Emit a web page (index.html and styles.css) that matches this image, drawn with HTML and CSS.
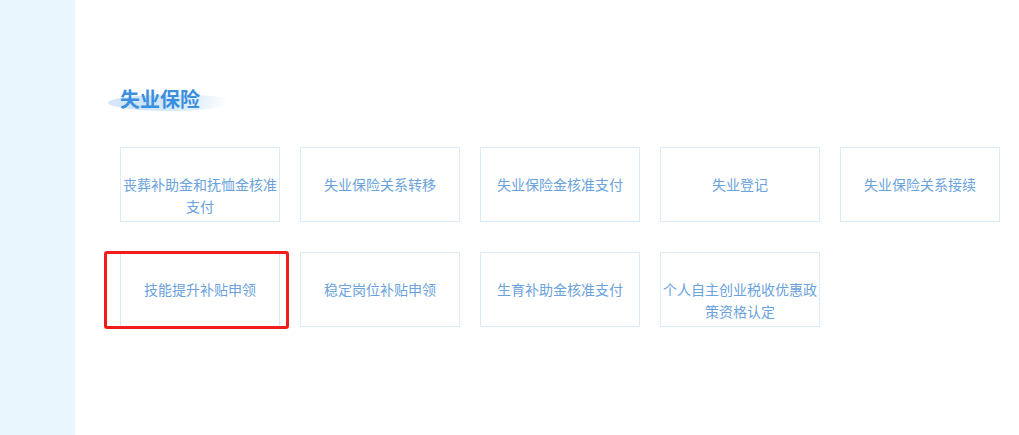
FILE: index.html
```html
<!DOCTYPE html>
<html lang="zh">
<head>
<meta charset="utf-8">
<link rel="stylesheet" href="styles.css">
</head>
<body>
<div class="page">
  <aside class="sidebar"></aside>
  <main class="main">
    <div class="title-wrap">
      <span class="brush"></span>
      <h2 class="title">失业保险</h2>
    </div>
    <div class="grid">
      <div class="card"><span>丧葬补助金和抚恤金核准支付</span></div>
      <div class="card"><span>失业保险关系转移</span></div>
      <div class="card"><span>失业保险金核准支付</span></div>
      <div class="card"><span>失业登记</span></div>
      <div class="card"><span>失业保险关系接续</span></div>
      <div class="card highlighted"><span>技能提升补贴申领</span><i class="mark"></i></div>
      <div class="card"><span>稳定岗位补贴申领</span></div>
      <div class="card"><span>生育补助金核准支付</span></div>
      <div class="card"><span>个人自主创业税收优惠政策资格认定</span></div>
    </div>
  </main>
</div>
</body>
</html>
```
FILE: styles.css
```css
html, body {
  margin: 0;
  padding: 0;
  background: #fff;
  font-family: "Noto Sans CJK SC", "Noto Sans", sans-serif;
}
.page {
  display: flex;
  height: 435px;
  overflow: hidden;
}
.sidebar {
  width: 75px;
  flex: none;
  background: #e8f6fe;
}
.main {
  flex: 1;
  padding: 83px 0 0 45px;
}
.title-wrap {
  position: relative;
  height: 34px;
  margin-bottom: 30px;
}
.brush {
  position: absolute;
  left: -12px;
  top: 12px;
  width: 120px;
  height: 16px;
  border-radius: 50% 40% 50% 60%;
  background: linear-gradient(90deg, rgba(185,216,245,0.6) 0%, rgba(200,225,248,0.9) 30%, rgba(212,232,250,0.75) 70%, rgba(230,242,252,0) 100%);
  transform: skewX(-20deg);
}
.title {
  position: relative;
  margin: 0;
  font-size: 20px;
  font-weight: bold;
  line-height: 32px;
  color: #3b8fdf;
}
.grid {
  display: grid;
  grid-template-columns: repeat(5, 160px);
  grid-auto-rows: 75px;
  column-gap: 20px;
  row-gap: 30px;
}
.card {
  position: relative;
  box-sizing: border-box;
  border: 1px solid #d8ecfb;
  display: flex;
  align-items: flex-start;
  justify-content: center;
  text-align: center;
  padding: 25px 1px 0;
  font-size: 14px;
  line-height: 22px;
  color: #6aa2dc;
}
.card span {
  display: block;
}
.mark {
  position: absolute;
  left: -17px;
  top: -2px;
  width: 179px;
  height: 72px;
  border: 3px solid #f11d1d;
  border-radius: 3px;
}
```
